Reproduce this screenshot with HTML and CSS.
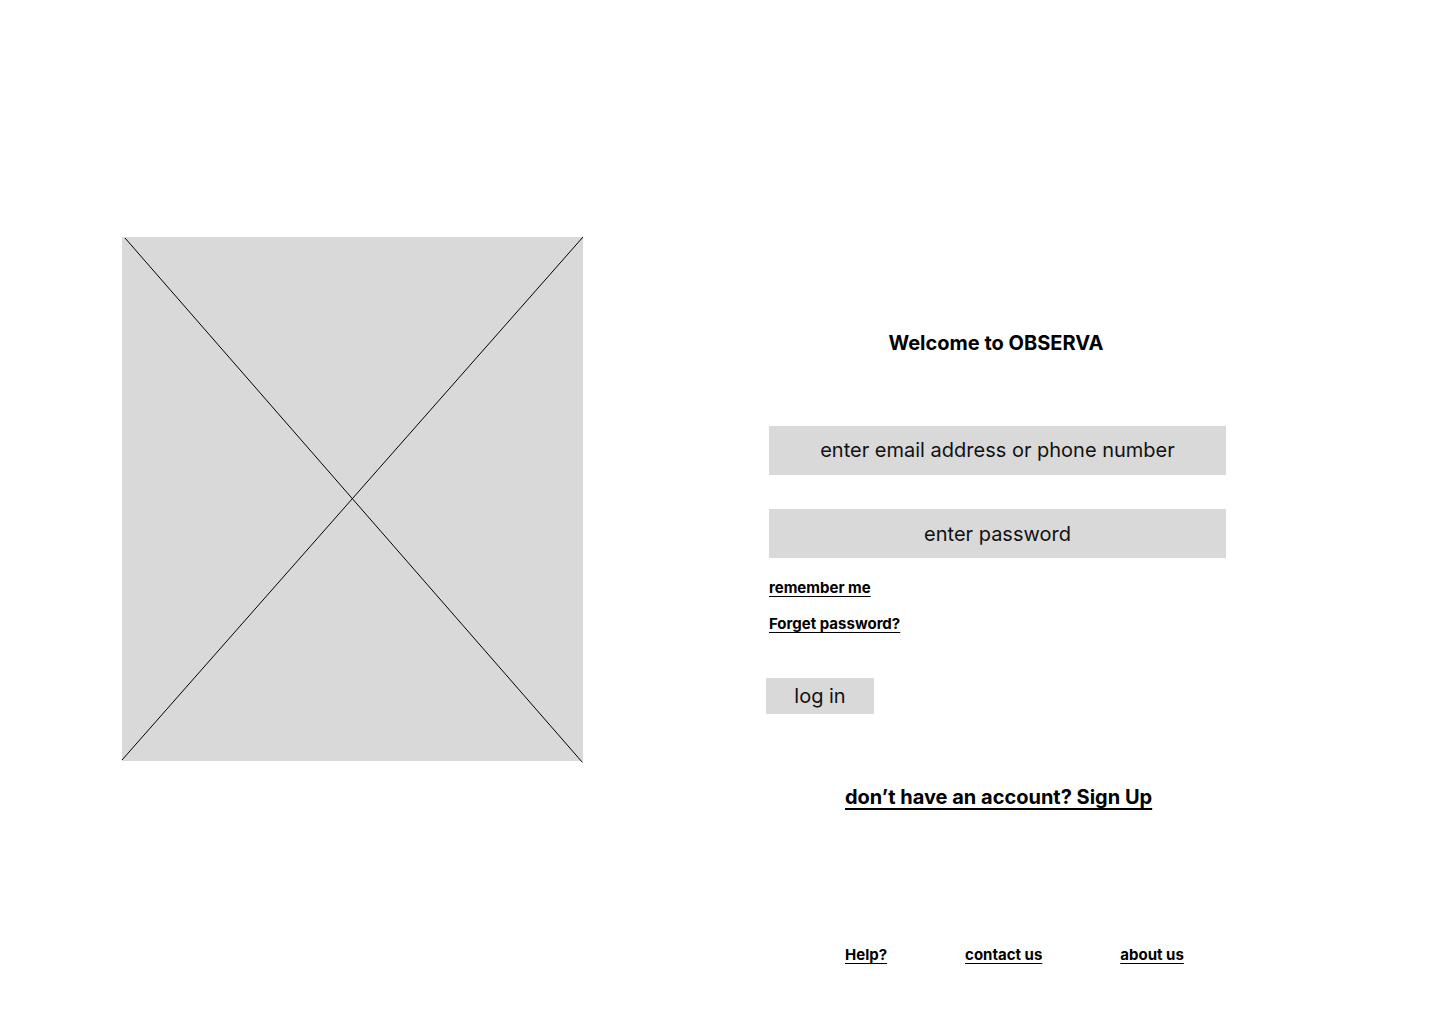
FILE: index.html
```html
<!DOCTYPE html>
<html lang="en">
<head>
<meta charset="utf-8">
<title>OBSERVA - Log in</title>
<link rel="stylesheet" href="styles.css">
</head>
<body>
<main class="page">
  <section class="visual">
    <div class="placeholder">
      <svg class="cross" width="461" height="526" viewBox="0 0 461 526">
        <line x1="3" y1="1" x2="460.5" y2="525.5" stroke="#000" stroke-width="1"/>
        <line x1="461" y1="0" x2="0" y2="523" stroke="#000" stroke-width="1"/>
      </svg>
    </div>
  </section>
  <section class="auth">
    <h1 class="title">Welcome to OBSERVA</h1>
    <div class="field field-email">enter email address or phone number</div>
    <div class="field field-pass">enter password</div>
    <a class="small-link remember" href="#">remember me</a>
    <a class="small-link forget" href="#">Forget password?</a>
    <button class="login" type="button">log in</button>
    <a class="signup" href="#">don’t have an account? Sign Up</a>
    <nav class="footer">
      <a class="small-link help" href="#">Help?</a>
      <a class="small-link contact" href="#">contact us</a>
      <a class="small-link about" href="#">about us</a>
    </nav>
  </section>
</main>
</body>
</html>
```
FILE: styles.css
```css
* { box-sizing: border-box; }
html, body { margin: 0; padding: 0; background: #fff; }
body {
  font-family: Inter, "Noto Sans", "Liberation Sans", sans-serif;
  color: #000;
  width: 1440px;
  height: 1024px;
  overflow: hidden;
}
.page {
  display: flex;
  align-items: flex-start;
}
.visual {
  padding: 237px 0 0 122px;
}
.placeholder {
  position: relative;
  width: 461px;
  height: 524px;
  background: #d9d9d9;
}
.cross {
  position: absolute;
  left: 0;
  top: 0;
  overflow: visible;
}
.auth {
  margin-left: 183px;
  width: 460px;
  padding-top: 331px;
  display: flex;
  flex-direction: column;
  align-items: flex-start;
}
.title {
  margin: 0;
  align-self: stretch;
  text-align: center;
  font-size: 20px;
  line-height: 24px;
  font-weight: 700;
}
.field {
  margin-left: 3px;
  width: 457px;
  height: 49px;
  background: #d9d9d9;
  display: flex;
  align-items: center;
  justify-content: center;
  font-size: 20px;
  font-weight: 400;
  color: #111;
}
.field-email { margin-top: 71px; padding-bottom: 2px; }
.field-pass { margin-top: 34px; }
.small-link {
  color: #000;
  font-size: 15px;
  line-height: 18px;
  font-weight: 700;
  text-decoration: underline;
  text-underline-offset: 3px;
  text-decoration-thickness: 1px;
}
.remember { margin: 21px 0 0 3px; }
.forget { margin: 18px 0 0 3px; }
.login {
  margin-top: 45px;
  width: 108px;
  height: 36px;
  border: none;
  background: #d9d9d9;
  font-family: inherit;
  font-size: 20px;
  color: #111;
  padding: 0;
  cursor: pointer;
}
.signup {
  margin: 71px 0 0 79px;
  font-size: 20px;
  line-height: 24px;
  font-weight: 700;
  color: #000;
  text-decoration: underline;
  text-underline-offset: 4px;
  text-decoration-thickness: 1.5px;
}
.footer {
  margin: 137px 0 0 79px;
  display: flex;
}
.contact { margin-left: 78px; }
.about { margin-left: 78px; }
```
